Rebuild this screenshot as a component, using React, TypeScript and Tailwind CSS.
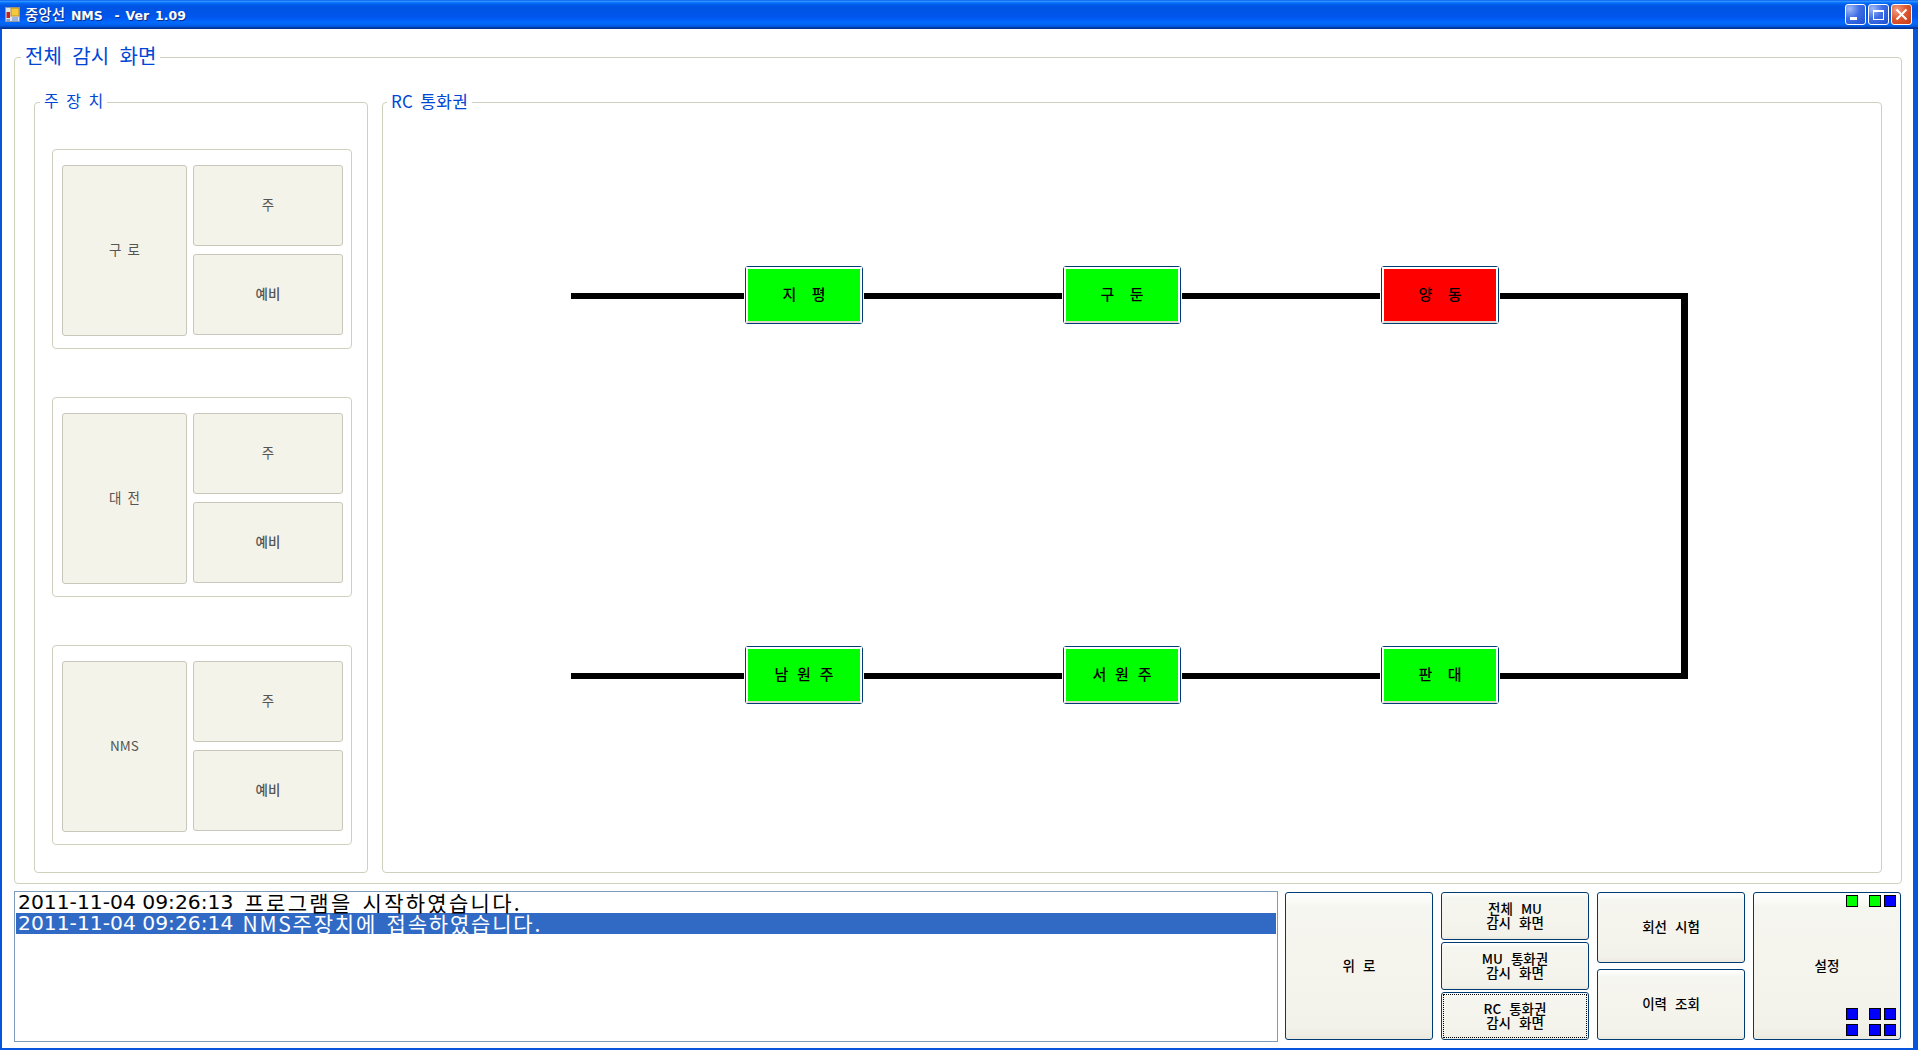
import React from "react";

const KR = "font-['Noto_Sans_CJK_KR','Noto_Sans',sans-serif]";

function Group({ label, labelClass, className, children }: { label: string; labelClass: string; className: string; children?: React.ReactNode }) {
  return (
    <div className={`relative border border-[#d0d0bf] rounded-[4px] ${className}`}>
      <span className={`absolute bg-white text-[#0046d5] leading-none whitespace-pre ${labelClass}`}>{label}</span>
      {children}
    </div>
  );
}

function Disabled({ label, className }: { label: string; className: string }) {
  return (
    <div className={`flex items-center justify-center pb-[2px] bg-[#f4f3ea] border border-[#c9c7ba] rounded-[3px] text-[13.5px] [word-spacing:3px] text-[#555] whitespace-pre ${className}`}>
      {label}
    </div>
  );
}

function Device({ name }: { name: string }) {
  return (
    <div className="flex gap-[6px] w-[300px] h-[200px] border border-[#d0d0bf] rounded-[4px] pt-[15px] pl-[9px]">
      <Disabled label={name} className="w-[125px] h-[171px]" />
      <div className="flex flex-col gap-[8px]">
        <Disabled label="주" className="w-[150px] h-[81px]" />
        <Disabled label="예비" className="w-[150px] h-[81px] font-medium" />
      </div>
    </div>
  );
}

function Node({ label, red, wide, className }: { label: string; red?: boolean; wide?: boolean; className: string }) {
  return (
    <div className={`absolute w-[118px] h-[58px] border border-[#003c74] rounded-[3px] bg-white shadow-[0_0_0_1px_#fff] ${className}`}>
      <div className={`flex items-center justify-center pb-[1px] h-full border-t-2 border-x-2 border-b-2 border-t-white border-x-white border-b-[#dcd8cc] text-[15px] font-medium text-black whitespace-pre ${wide ? "[word-spacing:12px]" : "[word-spacing:5.5px]"} ${red ? "bg-[#ff0000]" : "bg-[#00ff00]"}`}>
        {label}
      </div>
    </div>
  );
}

function XPButton({ children, className, focus, overlay }: { children: React.ReactNode; className: string; focus?: boolean; overlay?: React.ReactNode }) {
  return (
    <div className={`relative flex items-center justify-center pb-[3px] text-center border border-[#003c74] rounded-[3px] bg-[linear-gradient(to_bottom,#ffffff_0%,#f6f6f0_10%,#f3f2ea_92%,#ebe9df_100%)] text-[13.5px] font-medium leading-[14px] [word-spacing:5px] text-black whitespace-pre ${className}`}>
      {focus && <span className="absolute inset-[1px] border border-dotted border-black" />}
      <span className="relative">{children}</span>
      {overlay}
    </div>
  );
}

function Sq({ c, className }: { c: "g" | "b"; className: string }) {
  return <span className={`absolute w-[12px] h-[12px] border border-black ${c === "g" ? "bg-[#00ff00]" : "bg-[#0000ff]"} ${className}`} />;
}

function WinBtn({ kind }: { kind: "min" | "max" | "close" }) {
  const bg =
    kind === "close"
      ? "bg-[radial-gradient(circle_at_25%_25%,#f0a088_0%,#dd5a32_45%,#c63a14_100%)]"
      : "bg-[radial-gradient(circle_at_20%_20%,#9fb9f5_0%,#3f6fe6_45%,#1d4fd0_100%)]";
  return (
    <div className={`w-[21px] h-[21px] border border-white rounded-[3px] flex items-center justify-center ${bg}`}>
      {kind === "min" && (
        <svg width="19" height="19" viewBox="0 0 19 19"><rect x="4" y="12" width="7" height="3" fill="#fff" /></svg>
      )}
      {kind === "max" && (
        <svg width="19" height="19" viewBox="0 0 19 19"><rect x="4.5" y="5.5" width="10" height="9" fill="none" stroke="#fff" /><rect x="4" y="5" width="11" height="2" fill="#fff" /></svg>
      )}
      {kind === "close" && (
        <svg width="19" height="19" viewBox="0 0 19 19"><path d="M4.5 4.5 L14.5 14.5 M14.5 4.5 L4.5 14.5" stroke="#fff" strokeWidth="2" /></svg>
      )}
    </div>
  );
}

function LogRow({ stamp, text, className, textClass }: { stamp: string; text: string; className: string; textClass: string }) {
  return (
    <div className={`h-[21px] pl-[2px] flex items-center leading-[21px] ${className}`}>
      <span className="font-['DejaVu_Sans',sans-serif] text-[20.3px] pb-[1px]">{stamp}</span>
      <span className={`text-[21px] [word-spacing:3px] pb-[1px] ${textClass}`}>{text}</span>
    </div>
  );
}

export default function App() {
  return (
    <div className={`w-[1918px] h-[1050px] flex flex-col overflow-hidden bg-[#0855dd] ${KR}`}>
      <div className="h-[29px] shrink-0 flex items-center pl-[5px] pr-[6px] bg-[linear-gradient(to_bottom,#0058ee_0%,#3593ff_4%,#288eff_6%,#127dff_8%,#036ffc_10%,#0262ee_14%,#0057e5_20%,#0054e3_24%,#0055eb_56%,#005bf5_66%,#026afe_76%,#0062ef_86%,#0052d6_92%,#0040ab_94%,#003092_100%)]">
        <svg width="15" height="15" viewBox="0 0 15 15" className="shrink-0">
          <rect x="0.5" y="0.5" width="14" height="14" fill="#dfe6f2" stroke="#8a96aa" />
          <rect x="6" y="1" width="8" height="8" fill="#f6c93c" stroke="#b8902a" />
          <rect x="1.5" y="5" width="3.5" height="6" fill="#c8201c" />
          <rect x="7" y="10" width="6" height="4" fill="#9fb4d8" />
          <rect x="1.5" y="12" width="3.5" height="2" fill="#7fa0d0" />
        </svg>
        <span className="ml-[5px] font-['DejaVu_Sans',sans-serif] font-bold text-[12.5px] text-white whitespace-pre [word-spacing:1.5px] [text-shadow:1px_1px_0_#0a2f8a]">
          <span className="font-['Noto_Sans_CJK_KR',sans-serif] font-medium text-[14.5px]">중앙선</span> NMS  - Ver 1.09
        </span>
        <div className="ml-auto flex gap-[2px]">
          <WinBtn kind="min" />
          <WinBtn kind="max" />
          <WinBtn kind="close" />
        </div>
      </div>

      <div className="flex-1 mb-[2px] ml-[2px] mr-[5px] bg-white flex flex-col pt-[28px] pl-[12px] pr-[11px]">
        <Group label="전체 감시 화면" labelClass="left-[6px] top-[-12px] px-[4px] text-[20px] [word-spacing:6px]" className="w-[1888px] h-[827px] pt-[44px] pl-[19px] flex gap-[14px]">
          <Group label="주 장 치" labelClass="left-[5px] top-[-11px] px-[4px] text-[16px] [word-spacing:4px]" className="w-[334px] h-[771px] pt-[46px] pl-[17px] flex flex-col gap-[48px]">
            <Device name="구 로" />
            <Device name="대 전" />
            <Device name="NMS" />
          </Group>
          <Group label="RC 통화권" labelClass="left-[4px] top-[-11px] px-[4px] text-[17px] tracking-[0.3px] [word-spacing:3px]" className="w-[1500px] h-[771px]">
            <div className="absolute left-[188px] top-[190px] w-[1117px] h-[6px] bg-black" />
            <div className="absolute left-[188px] top-[570px] w-[1117px] h-[6px] bg-black" />
            <div className="absolute left-[1298px] top-[190px] w-[7px] h-[386px] bg-black" />
            <Node label="지 평" wide className="left-[362px] top-[163px]" />
            <Node label="구 둔" wide className="left-[680px] top-[163px]" />
            <Node label="양 동" wide red className="left-[998px] top-[163px]" />
            <Node label="남 원 주" className="left-[362px] top-[543px]" />
            <Node label="서 원 주" className="left-[680px] top-[543px]" />
            <Node label="판 대" wide className="left-[998px] top-[543px]" />
          </Group>
        </Group>

        <div className="flex mt-[7px] h-[151px]">
          <div className="w-[1264px] border border-[#7f9db9] pl-[1px] pr-[1px] whitespace-pre">
            <LogRow stamp="2011-11-04 09:26:13" text="프로그램을 시작하였습니다." textClass="ml-[11px] tracking-[2.3px]" className="text-black" />
            <LogRow stamp="2011-11-04 09:26:14" text="NMS주장치에 접속하였습니다." textClass="ml-[9px] tracking-[1.8px]" className="bg-[#316ac5] text-white" />
          </div>
          <div className="ml-[7px] flex gap-[8px] pt-[1px] h-[150px]">
            <XPButton className="w-[148px] h-[148px]">위 로</XPButton>
            <div className="flex flex-col gap-[2px] w-[148px]">
              <XPButton className="h-[48px]">{"전체 MU\n감시 화면"}</XPButton>
              <XPButton className="h-[48px]">{"MU 통화권\n감시 화면"}</XPButton>
              <XPButton focus className="h-[48px]">{"RC 통화권\n감시 화면"}</XPButton>
            </div>
            <div className="flex flex-col gap-[6px] w-[148px]">
              <XPButton className="h-[71px]">회선 시험</XPButton>
              <XPButton className="h-[71px]">이력 조회</XPButton>
            </div>
            <XPButton
              className="w-[148px] h-[148px]"
              overlay={
                <>
                  <Sq c="g" className="left-[92px] top-[2px]" />
                  <Sq c="g" className="left-[115px] top-[2px]" />
                  <Sq c="b" className="left-[130px] top-[2px]" />
                  <Sq c="b" className="left-[92px] top-[115px]" />
                  <Sq c="b" className="left-[115px] top-[115px]" />
                  <Sq c="b" className="left-[130px] top-[115px]" />
                  <Sq c="b" className="left-[92px] top-[131px]" />
                  <Sq c="b" className="left-[115px] top-[131px]" />
                  <Sq c="b" className="left-[130px] top-[131px]" />
                </>
              }
            >
              설정
            </XPButton>
          </div>
        </div>
      </div>
    </div>
  );
}
